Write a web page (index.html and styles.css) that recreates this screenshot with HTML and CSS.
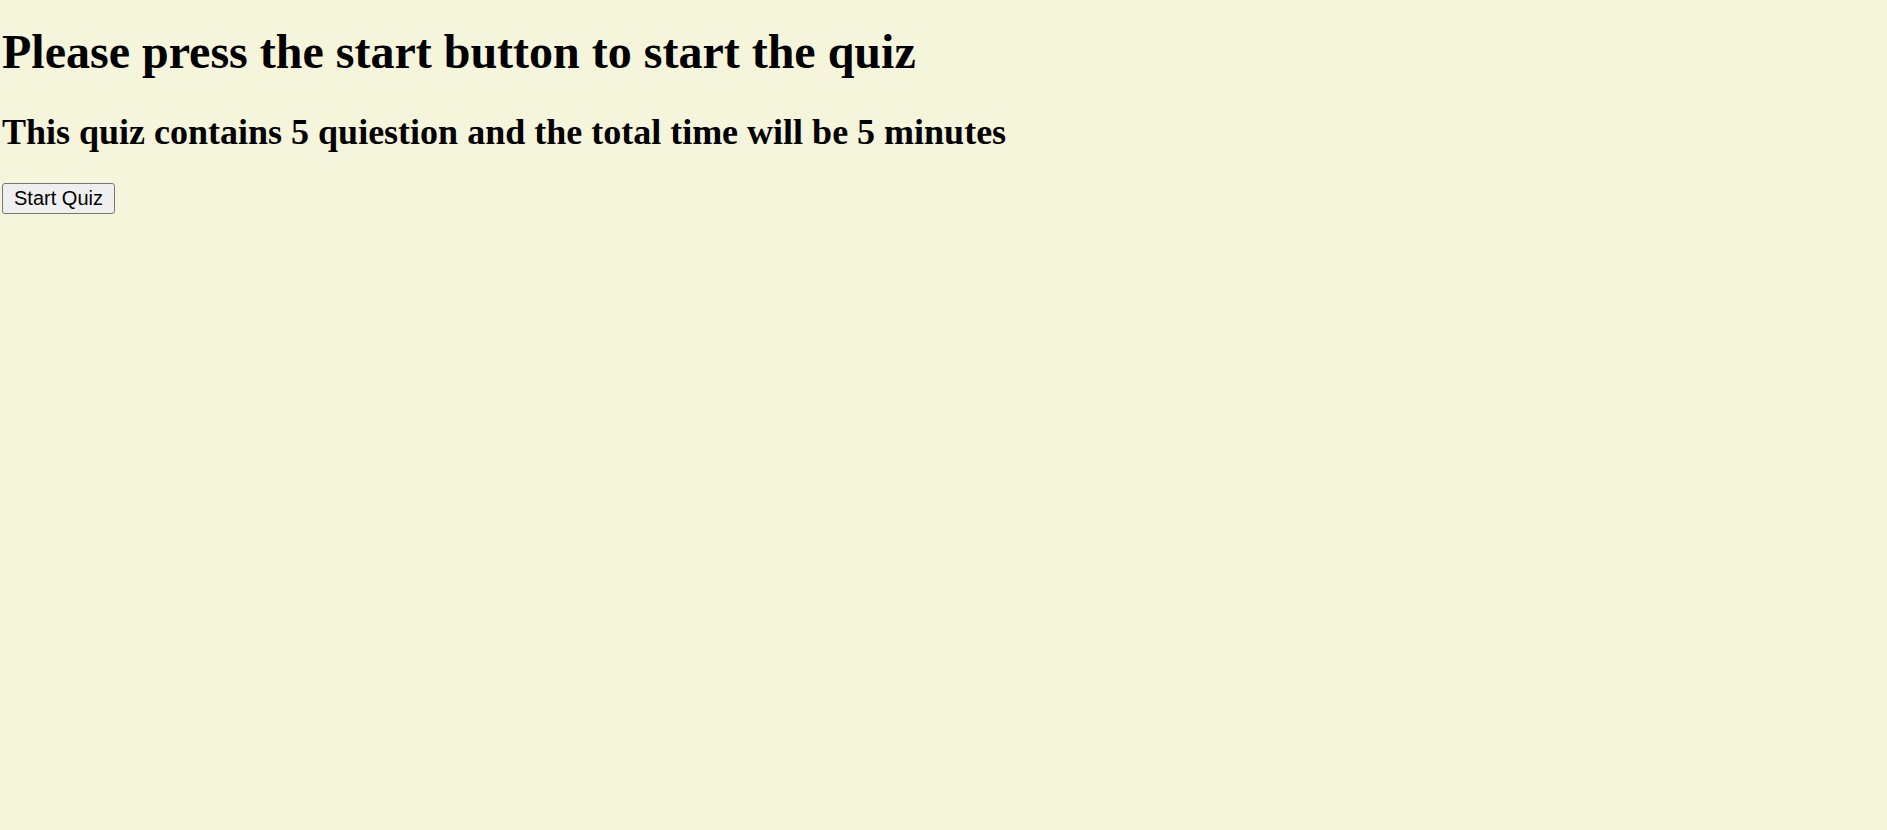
FILE: index.html
```html
<!DOCTYPE html>
<html>
<head>
<meta charset="utf-8">
<link rel="stylesheet" href="styles.css">
</head>
<body>
<div class="intro">
  <h1 class="title">Please press the start button to start the quiz</h1>
  <h2 class="subtitle">This quiz contains 5 quiestion and the total time will be 5 minutes</h2>
  <button class="start-btn">Start Quiz</button>
</div>
</body>
</html>
```
FILE: styles.css
```css
html, body {
  margin: 0;
  background: #f5f5dc;
}
body {
  font-family: "Liberation Serif", "Times New Roman", serif;
  color: #000;
}
.intro {
  padding: 0 0 0 2px;
}
.title {
  font-size: 48px;
  font-weight: bold;
  margin: 24px 0 0 0;
  line-height: 55px;
}
.subtitle {
  font-size: 36px;
  font-weight: bold;
  margin: 33px 0 0 0;
  line-height: 41px;
}
.start-btn {
  margin-top: 30px;
  font-family: "Liberation Sans", Arial, sans-serif;
  font-size: 20px;
  padding: 2px 9px;
  background: #efefef;
  border: 1.5px solid #767676;
  border-radius: 3px;
  color: #000;
  height: 31px;
  width: 113px;
}
```
